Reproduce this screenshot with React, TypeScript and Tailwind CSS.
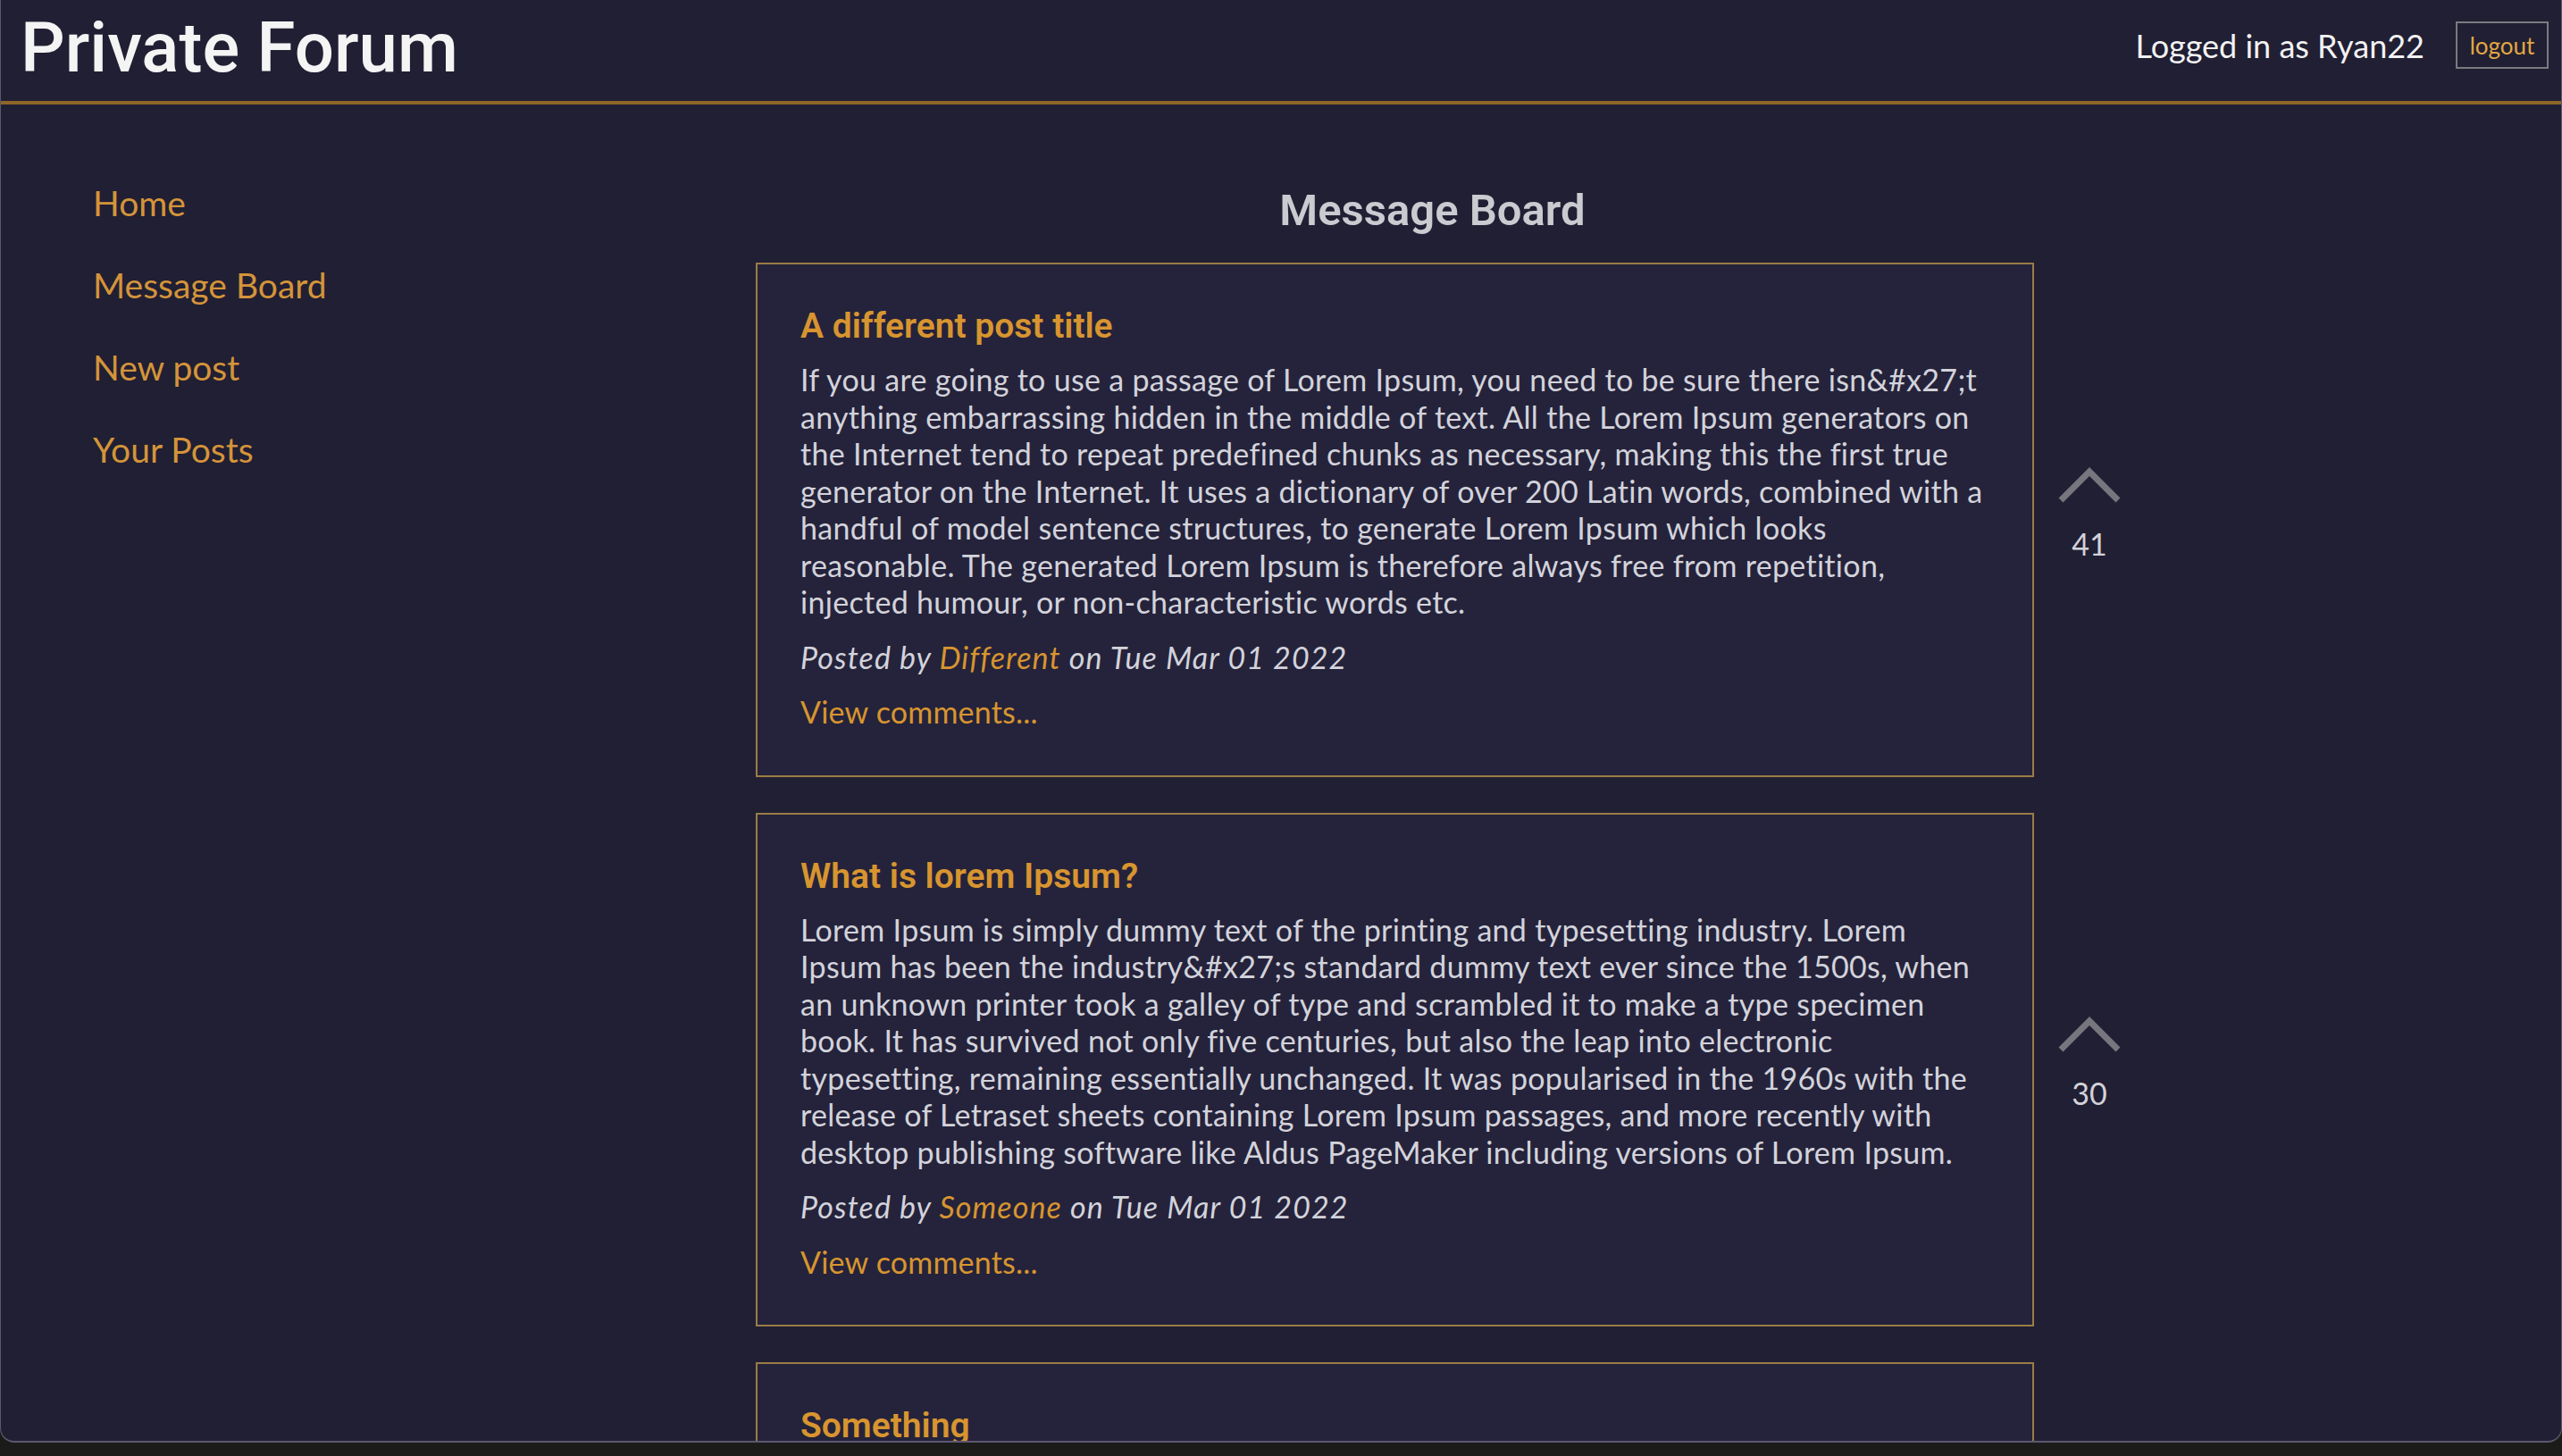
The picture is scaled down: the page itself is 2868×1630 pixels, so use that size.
import React from "react";

interface Post {
  id: number;
  title: string;
  body: string;
  author: string;
  date: string;
  votes: number;
}

const posts: Post[] = [
  {
    id: 1,
    title: "A different post title",
    body: "If you are going to use a passage of Lorem Ipsum, you need to be sure there isn&#x27;t anything embarrassing hidden in the middle of text. All the Lorem Ipsum generators on the Internet tend to repeat predefined chunks as necessary, making this the first true generator on the Internet. It uses a dictionary of over 200 Latin words, combined with a handful of model sentence structures, to generate Lorem Ipsum which looks reasonable. The generated Lorem Ipsum is therefore always free from repetition, injected humour, or non-characteristic words etc.",
    author: "Different",
    date: "Tue Mar 01 2022",
    votes: 41,
  },
  {
    id: 2,
    title: "What is lorem Ipsum?",
    body: "Lorem Ipsum is simply dummy text of the printing and typesetting industry. Lorem Ipsum has been the industry&#x27;s standard dummy text ever since the 1500s, when an unknown printer took a galley of type and scrambled it to make a type specimen book. It has survived not only five centuries, but also the leap into electronic typesetting, remaining essentially unchanged. It was popularised in the 1960s with the release of Letraset sheets containing Lorem Ipsum passages, and more recently with desktop publishing software like Aldus PageMaker including versions of Lorem Ipsum.",
    author: "Someone",
    date: "Tue Mar 01 2022",
    votes: 30,
  },
  {
    id: 3,
    title: "Something",
    body: "Contrary to popular belief, Lorem Ipsum is not simply random text. It has roots in a piece of classical Latin literature from 45 BC, making it over 2000 years old.",
    author: "Ryan22",
    date: "Tue Mar 01 2022",
    votes: 12,
  },
];

const navLinks = ["Home", "Message Board", "New post", "Your Posts"];

function UpVote({ votes }: { votes: number }) {
  return (
    <div className="w-[124px] shrink-0 flex flex-col items-center justify-center pb-[16px]">
      <button className="block">
        <svg width="80" height="46" viewBox="0 0 80 46" fill="none">
          <polyline
            points="8,41 40,9 72,41"
            stroke="#77767f"
            strokeWidth="7"
            strokeLinejoin="miter"
            strokeLinecap="butt"
          />
        </svg>
      </button>
      <span className="mt-[23px] text-[34px] leading-[41px] text-[#d2d2da] font-['Lato',sans-serif]">
        {votes}
      </span>
    </div>
  );
}

function PostCard({ post }: { post: Post }) {
  return (
    <div className="flex">
      <div className="w-[1431px] shrink-0 border-2 border-[#9a7d45] bg-[#25233b] pt-[47px] pb-[50px] pl-[48px] pr-[52px]">
        <h3 className="text-[39px] leading-[44px] font-semibold text-[#d8952f] font-['Roboto',sans-serif]">
          {post.title}
        </h3>
        <p className="mt-[17px] text-[34px] leading-[41.5px] tracking-[0.3px] text-[#d3d3db]">
          {post.body}
        </p>
        <p className="mt-[20px] text-[34px] leading-[41.5px] tracking-[1.1px] italic text-[#d3d3db]">
          Posted by <span className="text-[#d8952f]">{post.author}</span> on{" "}
          {post.date}
        </p>
        <a className="block mt-[20px] text-[34px] leading-[41.5px] tracking-[0.2px] text-[#d8952f] cursor-pointer">
          View comments...
        </a>
      </div>
      <UpVote votes={post.votes} />
    </div>
  );
}

export default function App() {
  return (
    <div className="w-full h-[1630px] bg-[#1b1c19] overflow-hidden font-['Lato',sans-serif]">
      <div className="h-[1615px] overflow-hidden bg-[#211f33] rounded-b-[16px] border-l border-r border-b-2 border-[#5c5871] flex flex-col">
        <header className="h-[117px] shrink-0 border-b-4 border-[#8d6728] flex items-center justify-between pl-[22px] pr-[14px] pb-[12px]">
          <h1 className="mt-[6px] text-[78px] leading-none font-medium text-[#f4f4f4] font-['Roboto',sans-serif]">
            Private Forum
          </h1>
          <div className="flex items-center gap-[35px]">
            <span className="text-[36px] text-[#f2f2f2]">Logged in as Ryan22</span>
            <button className="w-[104px] h-[53px] border-2 border-[#7b7a80] text-[26px] text-[#e2a744] leading-none">
              logout
            </button>
          </div>
        </header>

        <div className="flex flex-1">
          <aside className="w-[845px] shrink-0 pl-[103px] pt-[86px]">
            <nav className="flex flex-col gap-[44px]">
              {navLinks.map((link) => (
                <a
                  key={link}
                  className="text-[39px] leading-[48px] text-[#d4943a] cursor-pointer"
                >
                  {link}
                </a>
              ))}
            </nav>
          </aside>

          <main className="w-[1555px] shrink-0 pt-[89px]">
            <h2 className="pr-[40px] text-center text-[49px] leading-[59px] font-semibold text-[#c9cbd0] font-['Roboto',sans-serif]">
              Message Board
            </h2>
            <div className="mt-[29px] flex flex-col gap-[40px]">
              {posts.map((post) => (
                <PostCard key={post.id} post={post} />
              ))}
            </div>
          </main>
        </div>
      </div>
    </div>
  );
}
